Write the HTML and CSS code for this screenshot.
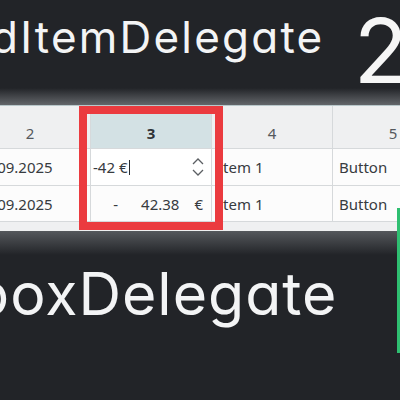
FILE: index.html
```html
<!DOCTYPE html>
<html>
<head>
<meta charset="utf-8">
<link rel="stylesheet" href="styles.css">
</head>
<body>
<div class="page">
  <div class="title-row">
    <div class="title">dItemDelegate</div>
    <div class="big-num">2</div>
  </div>
  <div class="shade-top"></div>
  <div class="table-band">
    <div class="grid">
      <div class="hcell">2</div>
      <div class="hcell hsel">3</div>
      <div class="hcell">4</div>
      <div class="hcell">5</div>

      <div class="cell">01.09.2025</div>
      <div class="cell editor">
        <span class="edit-text">-42 €</span><span class="caret"></span>
        <svg class="spin" width="14" height="20" viewBox="0 0 14 20">
          <path d="M2 7 L7 2 L12 7" fill="none" stroke="#5b5f63" stroke-width="1.3"/>
          <path d="M2 13 L7 18 L12 13" fill="none" stroke="#5b5f63" stroke-width="1.3"/>
        </svg>
      </div>
      <div class="cell">Item 1</div>
      <div class="cell">Button</div>

      <div class="cell">01.09.2025</div>
      <div class="cell money"><span class="sign">-</span><span class="amount">42.38</span><span class="cur">€</span></div>
      <div class="cell">Item 1</div>
      <div class="cell">Button</div>
    </div>
    <div class="strip"></div>
    <div class="highlight"></div>
  </div>
  <div class="shade-bottom"></div>
  <div class="sub-title">boxDelegate</div>
  <div class="green-bar"></div>
</div>
</body>
</html>
```
FILE: styles.css
```css
html, body {
  margin: 0;
  padding: 0;
  background: #222428;
  overflow: hidden;
}
.page {
  position: relative;
  width: 400px;
  height: 400px;
  overflow: hidden;
  background: #222428;
}
.title-row {
  height: 88px;
  display: flex;
  justify-content: space-between;
  align-items: flex-start;
}
.title {
  font-family: Inter, "Noto Sans", sans-serif;
  font-feature-settings: "cv11" 1;
  font-size: 44px;
  line-height: 1;
  letter-spacing: 2.2px;
  color: #f3f4f5;
  margin-left: -9px;
  padding-top: 15px;
  white-space: nowrap;
}
.big-num {
  font-family: Inter, "Noto Sans", sans-serif;
  font-size: 89px;
  line-height: 1;
  color: #f6f6f6;
  margin-top: 6px;
  margin-right: -8px;
}
.shade-top {
  height: 17px;
  background: linear-gradient(#222428, #63666a);
}
.table-band {
  position: relative;
  background: #eff0f1;
  border-top: 1px solid #b9c8cb;
  font-family: "Noto Sans", sans-serif;
  font-size: 15px;
  color: #373b3f;
}
.grid {
  display: grid;
  grid-template-columns: 121px 121px 121px 121px;
  grid-template-rows: 43px 37px 36px;
  margin-left: -30px;
  width: 484px;
}
.hcell {
  background: #eff0f1;
  border-right: 1px solid #d6d9db;
  border-bottom: 1px solid #d6d9db;
  display: flex;
  align-items: flex-end;
  justify-content: center;
  padding-bottom: 5px;
  color: #55595d;
  box-sizing: border-box;
}
.hsel {
  background: #d3e1e4;
  font-weight: bold;
  color: #2f3336;
}
.cell {
  background: #fcfcfc;
  border-right: 1px solid #d6d9db;
  border-bottom: 1px solid #d6d9db;
  display: flex;
  align-items: center;
  padding-left: 6px;
  box-sizing: border-box;
  white-space: nowrap;
}
.editor {
  background: #ffffff;
  padding-left: 2px;
  padding-right: 6px;
}
.caret {
  display: inline-block;
  width: 1px;
  height: 15px;
  background: #2a2d30;
  margin-left: 2px;
}
.spin {
  margin-left: auto;
}
.money {
  justify-content: flex-end;
  padding-right: 8px;
}
.sign {
  margin-right: 23px;
}
.amount {
  margin-right: 15px;
}
.strip {
  height: 9px;
  background: #eff0f1;
}
.highlight {
  position: absolute;
  left: 79px;
  top: 0;
  width: 144px;
  height: 124px;
  border: 8px solid #eb3b3f;
  box-sizing: border-box;
}
.shade-bottom {
  height: 24px;
  background: linear-gradient(#55585c, #222428);
}
.sub-title {
  font-family: Inter, "Noto Sans", sans-serif;
  font-feature-settings: "cv11" 1;
  font-size: 59px;
  line-height: 1;
  letter-spacing: 1px;
  color: #f3f4f5;
  margin-left: -27px;
  margin-top: 9px;
  white-space: nowrap;
}
.green-bar {
  position: absolute;
  left: 397px;
  top: 208px;
  width: 3px;
  height: 145px;
  background: #2fbf71;
}
```
